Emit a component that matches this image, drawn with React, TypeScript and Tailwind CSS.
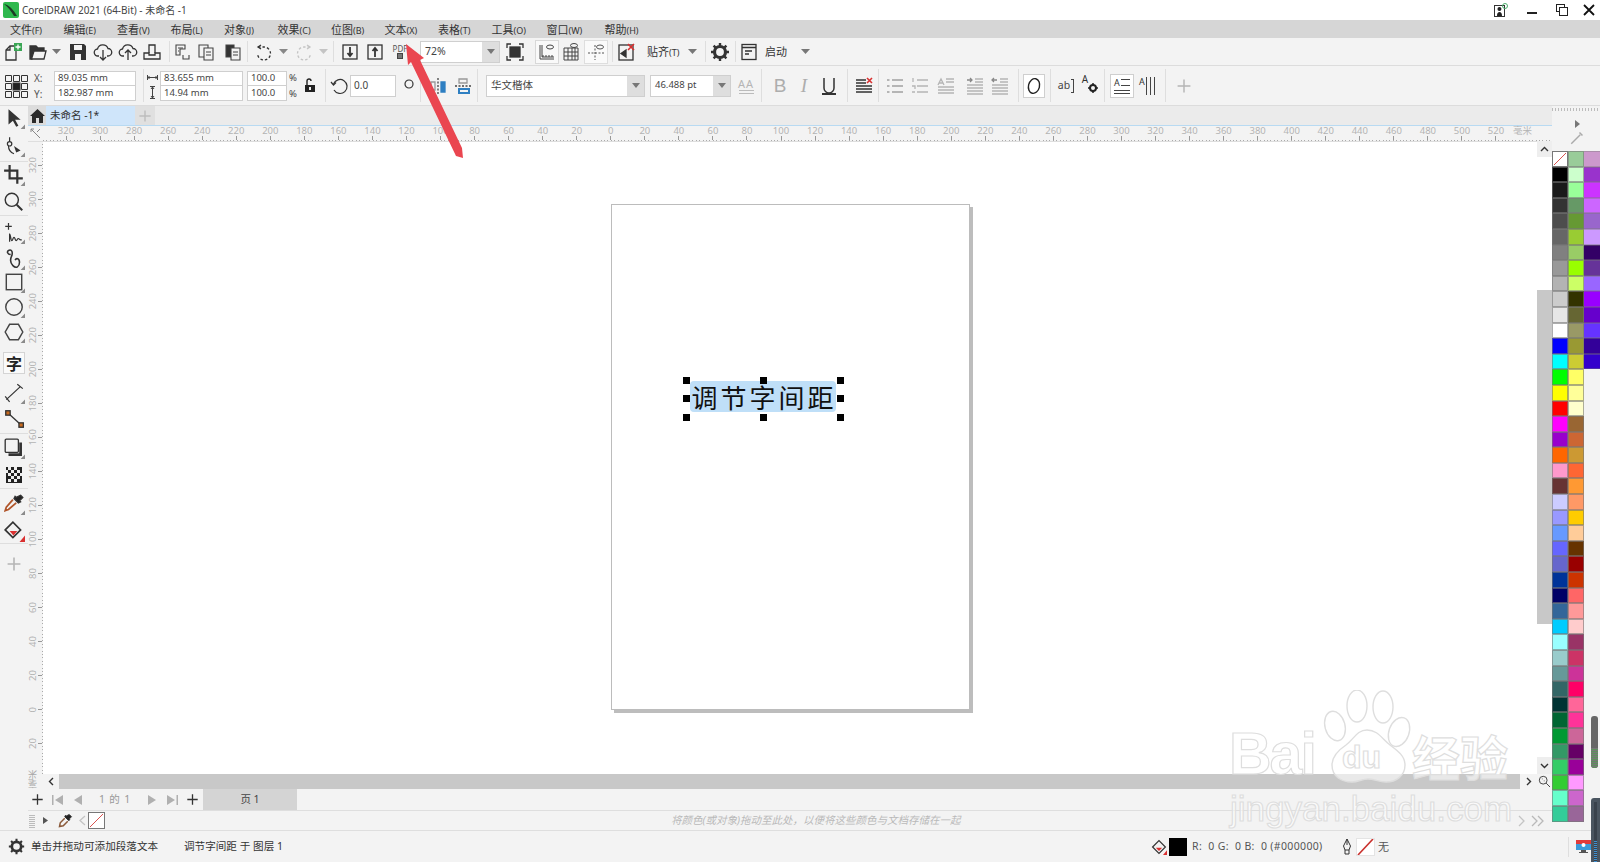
import type { ReactNode } from 'react'

const col1 = ['#000000', '#1a1a1a', '#333333', '#4d4d4d', '#666666', '#808080', '#999999', '#b3b3b3', '#cccccc', '#e6e6e6', '#ffffff', '#0000ff', '#00ffff', '#00ff00', '#ffff00', '#ff0000', '#ff00ff', '#9900cc', '#ff6600', '#ff99cc', '#663333', '#ccccff', '#9999ff', '#6699ff', '#6666ff', '#6666cc', '#003399', '#000066', '#336699', '#00ccff', '#99ffff', '#99cccc', '#669999', '#336666', '#003333', '#006633', '#009933', '#339966', '#33cc66', '#33cc33', '#66ffcc', '#33cc99']
const col2 = ['#99cc99', '#ccffcc', '#99ff99', '#669966', '#669933', '#99cc33', '#99cc66', '#99ff00', '#ccff66', '#333300', '#666633', '#999966', '#999933', '#cccc33', '#ffff66', '#ffff99', '#ffffcc', '#996633', '#cc6633', '#cc9933', '#ff6633', '#ff9933', '#ff9966', '#ffcc00', '#ffcc99', '#663300', '#990000', '#cc3300', '#ff6666', '#ff9999', '#ffcccc', '#993366', '#cc3366', '#cc3399', '#ff0066', '#ff6699', '#ff3399', '#cc6699', '#660066', '#990099', '#ff99ff', '#cc66cc', '#996699']
const col3 = ['#cc99cc', '#9933cc', '#cc33ff', '#cc66ff', '#9966cc', '#cc99ff', '#330066', '#663399', '#9966ff', '#9900ff', '#6600cc', '#6633ff', '#330099', '#3300cc']

const menus = ['文件|(F)', '编辑|(E)', '查看|(V)', '布局|(L)', '对象|(J)', '效果|(C)', '位图|(B)', '文本|(X)', '表格|(T)']
const hLabels = [320, 300, 280, 260, 240, 220, 200, 180, 160, 140, 120, 100, 80, 60, 40, 20, 0, 20, 40, 60, 80, 100, 120, 140, 160, 180, 200, 220, 240, 260, 280, 300, 320, 340, 360, 380, 400, 420, 440, 460, 480, 500, 520]
const vLabels = [320, 300, 280, 260, 240, 220, 200, 180, 160, 140, 120, 100, 80, 60, 40, 20, 0, 20]

function Ico({ s = 20, w = 1.3, c = '#333', children }: { s?: number; w?: number; c?: string; children: ReactNode }) {
  return (
    <svg width={s} height={s} viewBox="0 0 20 20" fill="none" stroke={c} strokeWidth={w} className="shrink-0">
      {children}
    </svg>
  )
}

const Corner = () => <path d="M20 20h-4l4-4z" fill="#8a8a8a" stroke="none" />

function Sep({ className = '' }: { className?: string }) {
  return <div className={`w-px self-stretch my-[3px] bg-[#dedede] shrink-0 ${className}`} />
}

function Slot({ className = '', children }: { className?: string; children: ReactNode }) {
  return <div className={`w-[24px] shrink-0 flex items-center justify-center ${className}`}>{children}</div>
}

function Drop({ className = '', c = '#777' }: { className?: string; c?: string }) {
  return (
    <div className={`w-[12px] shrink-0 flex items-center justify-center ${className}`}>
      <svg width="9" height="6" viewBox="0 0 9 6"><path d="M0 0h9L4.500 5z" fill={c} /></svg>
    </div>
  )
}

function Field({ className = '', children }: { className?: string; children: ReactNode }) {
  return <div className={`h-[15px] bg-white border border-[#cfcfcf] pl-[3px] flex items-center text-[9.5px] text-[#444] leading-none ${className}`}>{children}</div>
}

function Combo({ className = '', text, size = 'text-[10.5px]' }: { className?: string; text: string; size?: string }) {
  return (
    <div className={`h-[22px] shrink-0 flex bg-white border border-[#cfcfcf] ${className}`}>
      <span className={`flex-1 pl-[4px] flex items-center text-[#444] truncate ${size}`}>{text}</span>
      <span className="w-[17px] bg-[#dedede] flex items-center justify-center">
        <svg width="8" height="5" viewBox="0 0 8 5"><path d="M0 0h8L4 5z" fill="#777" /></svg>
      </span>
    </div>
  )
}

function Menu({ label, className = 'w-[53.5px]' }: { label: string; className?: string }) {
  const [a, b] = label.split('|')
  return (
    <div className={`shrink-0 text-[#333] text-[11px] leading-none whitespace-nowrap ${className}`}>
      {a}<span className="text-[9px]">{b}</span>
    </div>
  )
}

function Tool({ className, children }: { className: string; children: ReactNode }) {
  return <div className={`w-full flex items-center justify-center shrink-0 ${className}`}>{children}</div>
}

function Watermark() {
  return (
    <div className="absolute left-[1225px] top-[690px] w-[295px] h-[145px] pointer-events-none text-white/60 [font-family:'Liberation_Sans','Noto_Sans_CJK_SC',sans-serif] [-webkit-text-stroke:1.2px_#dedede]">
      <svg width="295" height="115" viewBox="1225 690 295 115" className="absolute left-0 top-0" fill="rgba(255,255,255,0.6)" stroke="#dedede" strokeWidth="1.4">
        <ellipse cx="1357" cy="706" rx="10" ry="16" />
        <ellipse cx="1383" cy="707" rx="10" ry="16" />
        <ellipse cx="1335" cy="726" rx="10" ry="15" transform="rotate(-15 1335 726)" />
        <ellipse cx="1399" cy="732" rx="10" ry="15" transform="rotate(20 1399 732)" />
        <path d="M1367 730c-10 0-13 9-21 15-9 6-14 12-14 20 0 12 10 17 20 17 6 0 10-3 16-3 6 0 11 3 18 3 10 0 19-6 19-17 0-9-7-14-15-20-8-6-12-15-23-15z" />
      </svg>
      <div className="absolute left-[4px] top-[35px] text-[59px] font-bold leading-none tracking-[-2px]">Bai</div>
      <div className="absolute left-[117px] top-[51px] text-[32px] font-bold leading-none">du</div>
      <div className="absolute left-[187px] top-[41px] text-[48px] font-bold leading-none whitespace-nowrap [font-family:'Noto_Sans_CJK_SC',sans-serif]">经验</div>
      <div className="absolute left-[5px] top-[101px] text-[35px] leading-none whitespace-nowrap">jingyan.baidu.com</div>
    </div>
  )
}

export default function App() {
  return (
    <div className="relative w-[1600px] h-[862px] overflow-hidden flex flex-col bg-[#f3f3f3] text-[#333] [font-family:'Noto_Sans','Noto_Sans_CJK_SC',sans-serif]">
      {/* title bar */}
      <div className="h-[20px] bg-white flex items-center shrink-0">
        <svg width="16" height="16" viewBox="0 0 16 16" className="ml-[3px] shrink-0">
          <rect width="16" height="16" rx="2" fill="#2fb84e" />
          <path d="M1 2c5 1 9 5 13 12l-3 0C8 9 5 5 1 2z" fill="#1c3b26" />
        </svg>
        <span className="ml-[3px] text-[10px] text-[#444] whitespace-nowrap">CorelDRAW 2021 (64-Bit) - 未命名 -1</span>
        <div className="ml-auto flex items-center">
          <svg width="14" height="14" viewBox="0 0 14 14" fill="none" className="shrink-0">
            <rect x="0.500" y="2.500" width="10" height="11" stroke="#333" />
            <path d="M3 13c0-3 1-4 2.500-4S8 10 8 13zM5.500 4a2 2 0 1 1-.1 4 2 2 0 0 1 .1-4z" fill="#222" />
            <circle cx="11" cy="3" r="2.500" stroke="#4caf6c" />
          </svg>
          <div className="ml-[19px] w-[10px] h-[2px] bg-[#222] mt-[5px]" />
          <svg width="12" height="12" viewBox="0 0 12 12" fill="none" stroke="#222" className="ml-[19px] shrink-0">
            <rect x="0.500" y="0.500" width="8" height="7" />
            <rect x="3.500" y="3.500" width="8" height="8" fill="#fff" />
          </svg>
          <svg width="12" height="12" viewBox="0 0 12 12" stroke="#111" strokeWidth="1.800" className="ml-[15px] mr-[5px] shrink-0"><path d="M1 1l10 10M11 1L1 11" /></svg>
        </div>
      </div>

      {/* menu bar */}
      <div className="h-[18px] bg-[#d6d6d6] flex items-center pl-[10px] shrink-0">
        {menus.map((m) => <Menu key={m} label={m} />)}
        <Menu label="工具|(O)" className="w-[55px]" />
        <Menu label="窗口|(W)" className="w-[58px]" />
        <Menu label="帮助|(H)" className="w-[50px]" />
      </div>

      {/* standard toolbar */}
      <div className="h-[28px] flex items-center shrink-0 border-b border-[#dcdcdc]">
        <Slot className="ml-[1px]">
          <Ico><path d="M3 18V8l4-4h6v14z" /><path d="M3 8h4V4" /><rect x="11" y="1" width="8" height="8" fill="#3aa655" stroke="none" /><path d="M15 2.500v5M12.500 5h5" stroke="#fff" /></Ico>
        </Slot>
        <Slot className="ml-[1px]">
          <Ico><path d="M2 4h6l2 2h6v3H6l-2 8H2z" fill="#333" /><path d="M6 9h12l-2 8H3.500z" fill="#f3f3f3" /></Ico>
        </Slot>
        <Drop />
        <Slot className="ml-[4px]">
          <Ico w={0}><path d="M2 2h14l2 2v14H2z" fill="#333" /><rect x="6" y="3" width="8" height="5" fill="#f3f3f3" /><rect x="7" y="12" width="6" height="6" fill="#f3f3f3" /></Ico>
        </Slot>
        <Slot className="ml-[1px]">
          <Ico><path d="M6 14H5a3.500 3.500 0 0 1-.5-7A5.500 5.500 0 0 1 15 6.500 3.700 3.700 0 0 1 15 14h-1" /><path d="M10 8v10M7 15l3 3 3-3" /></Ico>
        </Slot>
        <Slot className="ml-[1px]">
          <Ico><path d="M6 14H5a3.500 3.500 0 0 1-.5-7A5.500 5.500 0 0 1 15 6.500 3.700 3.700 0 0 1 15 14h-1" /><path d="M10 18V8M7 11l3-3 3 3" /></Ico>
        </Slot>
        <Slot>
          <Ico><path d="M7 11V3h6v8" /><path d="M2 11h5v2h6v-2h5v6H2z" /></Ico>
        </Slot>
        <Sep className="ml-[5px]" />
        <Slot>
          <Ico c="#444" w={1.1}><path d="M4 3h9v4h-5v6H4z" /><path d="M6 6h5M6 9h1" /><path d="M11 13v4h6v-4" /></Ico>
        </Slot>
        <Slot>
          <Ico c="#444" w={1.1}><path d="M3 3h9v12H3z" /><path d="M8 6h9v12H8z" fill="#f3f3f3" /><path d="M10 10h5M10 13h5" /></Ico>
        </Slot>
        <Slot className="ml-[3px]">
          <Ico c="#444" w={1.1}><path d="M3 3h8v12H3z" fill="#333" /><path d="M8 6h9v12H8z" fill="#f3f3f3" /><path d="M10 10h5M10 13h5" /></Ico>
        </Slot>
        <Sep className="ml-[2px]" />
        <Slot className="ml-[4px]">
          <Ico><path d="M7 3l-3 2 3 2" /><path d="M4 5h6a6.500 6.500 0 1 1-6.500 7" strokeDasharray="2.500 2" /></Ico>
        </Slot>
        <Drop className="ml-[1px]" c="#888" />
        <Slot className="ml-[3px]">
          <Ico c="#c4c4c4"><path d="M13 3l3 2-3 2" /><path d="M16 5h-6a6.500 6.500 0 1 0 6.500 7" strokeDasharray="2.500 2" /></Ico>
        </Slot>
        <Drop className="ml-[1px]" c="#c4c4c4" />
        <Sep className="ml-[4px]" />
        <Slot className="ml-[4px]">
          <Ico><rect x="3" y="3" width="14" height="14" /><path d="M10 5v9M7.500 11l2.500 3 2.500-3" strokeWidth="1.800" /></Ico>
        </Slot>
        <Slot className="ml-[1px]">
          <Ico><rect x="3" y="3" width="14" height="14" /><path d="M10 15V6M7.500 9L10 6l2.500 3" strokeWidth="1.800" /></Ico>
        </Slot>
        <Slot className="ml-[1px]">
          <div className="flex flex-col items-center leading-none text-[#555]">
            <span className="text-[8px] leading-[8px]">PDF</span>
            <span className="w-[6px] h-[6px] border border-[#444] bg-[#777]" />
          </div>
        </Slot>
        <Combo className="ml-[8px] w-[80px]" text="72%" />
        <Slot className="ml-[3px]">
          <Ico><path d="M2 6V2h4M14 2h4v4M18 14v4h-4M6 18H2v-4" /><rect x="5" y="5" width="10" height="10" fill="#333" /></Ico>
        </Slot>
        <Slot className="ml-[8px] h-[24px] bg-[#f9f9f9] border border-[#d8d8d8]">
          <Ico c="#444" w={1}><path d="M3 3v14h14" /><path d="M5 3v12h12M6 13v2M9 13v2M12 13v2M15 13v2" /><ellipse cx="13" cy="5" rx="3.500" ry="2" /></Ico>
        </Slot>
        <Slot>
          <Ico c="#444" w={1}><path d="M3 6h14v12H3zM3 10h14M3 14h14M7 6v12M11 6v12M14 6v12" /><ellipse cx="13" cy="3.500" rx="3.500" ry="2" /></Ico>
        </Slot>
        <Slot className="ml-[1px] h-[24px] bg-[#fafafa] border border-[#dedede]">
          <Ico c="#555" w={1}><path d="M9 3v15M2 11h16" strokeDasharray="2 1.500" /><ellipse cx="14" cy="5" rx="3.500" ry="2" /></Ico>
        </Slot>
        <Sep className="ml-[4px]" />
        <Slot className="ml-[2px]">
          <Ico><rect x="2" y="3" width="14" height="15" /><path d="M9 8l-5 3.500L9 15z" fill="#333" /><path d="M11 2l6 6M17 2l-6 6" stroke="#d93030" strokeWidth="1.600" /></Ico>
        </Slot>
        <span className="ml-[8px] w-[33px] shrink-0 text-[11px] leading-none whitespace-nowrap">贴齐<span className="text-[9px]">(T)</span></span>
        <Drop className="ml-[6px]" />
        <Sep className="ml-[7px]" />
        <Slot className="ml-[2px]">
          <Ico w={3.200}><circle cx="10" cy="10" r="5.500" /><path d="M10 1v3M10 16v3M1 10h3M16 10h3M3.600 3.600l2 2M14.400 14.400l2 2M16.400 3.600l-2 2M5.600 14.400l-2 2" strokeWidth="2.400" /></Ico>
        </Slot>
        <Sep className="ml-[3px]" />
        <Slot className="ml-[1px]">
          <Ico><rect x="3" y="2.500" width="14" height="15" /><path d="M3 5.500h14M6 9h7M6 12h4" /></Ico>
        </Slot>
        <span className="ml-[4px] w-[22px] shrink-0 text-[11px] leading-none whitespace-nowrap">启动</span>
        <Drop className="ml-[12px]" />
      </div>

      {/* property bar */}
      <div className="h-[40px] flex items-center shrink-0 border-b border-[#dcdcdc]">
        <Slot className="ml-[4px]">
          <svg width="24" height="24" viewBox="0 0 24 24" fill="none" stroke="#333" className="shrink-0">
            <path d="M1.500 1.500h6v6h-6zM9.500 1.500h6v6h-6zM17.500 1.500h6v6h-6zM1.500 9.500h6v6h-6zM17.500 9.500h6v6h-6zM1.500 17.500h6v6h-6zM9.500 17.500h6v6h-6zM17.500 17.500h6v6h-6z" />
            <rect x="9" y="9" width="7" height="7" fill="#222" />
          </svg>
        </Slot>
        <div className="ml-[6px] w-[20px] shrink-0 flex flex-col gap-[1px] text-[10px] text-[#555] leading-none">
          <span className="h-[15px] flex items-center">X:</span>
          <span className="h-[15px] flex items-center">Y:</span>
        </div>
        <div className="w-[82px] shrink-0 flex flex-col">
          <Field>89.035 mm</Field>
          <Field className="-mt-px h-[16px]">182.987 mm</Field>
        </div>
        <Sep className="ml-[7px]" />
        <div className="ml-[2px] w-[12px] shrink-0 flex flex-col items-center gap-[3px]">
          <svg width="11" height="11" viewBox="0 0 11 11" stroke="#444"><path d="M0.500 3v5M10.500 3v5M1 5.500h9M2.500 4l-1.500 1.500L2.500 7M8.500 4L10 5.500 8.500 7" fill="none" /></svg>
          <svg width="11" height="13" viewBox="0 0 11 13" stroke="#444"><path d="M3 .5h5M3 12.500h5M5.500 1v11M4 3l1.500-2L7 3M4 10l1.500 2L7 10" fill="none" /></svg>
        </div>
        <div className="ml-[2px] w-[83px] shrink-0 flex flex-col">
          <Field>83.655 mm</Field>
          <Field className="-mt-px h-[16px]">14.94 mm</Field>
        </div>
        <div className="ml-[4px] w-[40px] shrink-0 flex flex-col">
          <Field>100.0</Field>
          <Field className="-mt-px h-[16px]">100.0</Field>
        </div>
        <div className="ml-[2px] w-[8px] shrink-0 flex flex-col gap-[1px] text-[9.5px] text-[#444] leading-none">
          <span className="h-[15px] flex items-center">%</span>
          <span className="h-[15px] flex items-center">%</span>
        </div>
        <Slot className="ml-[1px]">
          <svg width="12" height="15" viewBox="0 0 12 15" fill="none" className="shrink-0"><path d="M3 7V3a2 2 0 0 1 4 0" stroke="#222" strokeWidth="1.400" /><rect x="1" y="7" width="10" height="7" fill="#222" /><rect x="5" y="9" width="2" height="3" fill="#eee" /></svg>
        </Slot>
        <Sep className="ml-[3px]" />
        <div className="ml-[4px] w-[20px] shrink-0 flex justify-center">
          <Ico w={1.200}><path d="M3.500 8a7 7 0 1 1 .5 6" /><path d="M1 6l2.500 3L6 6.500" /></Ico>
        </div>
        <div className="w-[46px] h-[22px] shrink-0 bg-white border border-[#cfcfcf] pl-[3px] flex items-center text-[10px] text-[#444]">0.0</div>
        <div className="ml-[3px] w-[20px] shrink-0 flex justify-center pb-[4px]">
          <svg width="10" height="10" viewBox="0 0 10 10" fill="none" stroke="#333" strokeWidth="1.200"><circle cx="5" cy="5" r="4" /></svg>
        </div>
        <Sep className="ml-[1px]" />
        <Slot className="ml-[5px]">
          <Ico c="#777" w={1.300}><path d="M10 2v16" strokeDasharray="2 1.500" stroke="#444" /><path d="M3 6h4v8H3z" stroke="#999" /><path d="M13 6h4v10h-4z" fill="#2e7fc2" stroke="#2e7fc2" /></Ico>
        </Slot>
        <Slot className="ml-[1px]">
          <Ico w={1.300}><path d="M2 10h16" strokeDasharray="2 1.500" stroke="#444" /><path d="M6 3h8v4H6z" stroke="#999" /><path d="M6 13h10v4H6z" fill="none" stroke="#2e7fc2" strokeWidth="2" /></Ico>
        </Slot>
        <Sep className="ml-[2px]" />
        <Combo className="ml-[8px] w-[159px]" text="华文楷体" />
        <Combo className="ml-[5px] w-[81px]" text="46.488 pt" size="text-[9.5px]" />
        <Slot className="ml-[3px]">
          <div className="flex flex-col items-center leading-none text-[#b5b5b5]">
            <span className="text-[11px] leading-[12px] tracking-[1px]">AA</span>
            <span className="w-[15px] h-[4px] border-y border-[#bbb]" />
          </div>
        </Slot>
        <Sep className="ml-[3px]" />
        <Slot className="ml-[6px] text-[19px] leading-none text-[#adadad] [font-family:'Liberation_Sans',sans-serif]">B</Slot>
        <Slot className="text-[19px] leading-none text-[#adadad] italic [font-family:'Liberation_Serif',serif]">I</Slot>
        <Slot className="ml-[1px]">
          <Ico w={1.500}><path d="M5 2v10a5 5 0 0 0 10 0V2" /><path d="M3 18h14" strokeWidth="2" /></Ico>
        </Slot>
        <Sep className="ml-[6px]" />
        <Slot className="ml-[4px]">
          <Ico w={1.600}><path d="M2 4h10M2 7h10M2 10h16M2 13h16M2 16h16" /><path d="M13 2l5 5M18 2l-5 5" stroke="#d93030" /></Ico>
        </Slot>
        <Sep className="ml-[2px]" />
        <Slot className="ml-[4px]">
          <Ico c="#b5b5b5"><path d="M7 4h11M7 10h11M7 16h11M2 4h2.500M2 10h2.500M2 16h2.500" strokeWidth="2" /></Ico>
        </Slot>
        <Slot className="ml-[1px]">
          <Ico c="#b5b5b5"><path d="M7 4h11M7 10h11M7 16h11M3 2v4M2 10h3v3M2 16h3" /></Ico>
        </Slot>
        <Slot className="ml-[2px]">
          <Ico c="#b5b5b5"><path d="M2 9l3-6 3 6M3 7h4M10 3h8M10 6h8M2 11h16M2 14h16M2 17h16" /></Ico>
        </Slot>
        <Slot className="ml-[5px]">
          <Ico c="#b5b5b5"><path d="M10 3h8M10 6h8M2 9h16M2 12h16M2 15h16M2 18h16" /><path d="M2 4h5M5 2l2 2-2 2" stroke="#888" /></Ico>
        </Slot>
        <Slot className="ml-[1px]">
          <Ico c="#b5b5b5"><path d="M10 3h8M10 6h8M2 9h16M2 12h16M2 15h16M2 18h16" /><path d="M7 4H2M4 2L2 4l2 2" stroke="#888" /></Ico>
        </Slot>
        <Sep className="ml-[6px]" />
        <div className="ml-[4px] w-[22px] h-[24px] shrink-0 bg-white border border-[#cfcfcf] flex items-center justify-center">
          <svg width="16" height="18" viewBox="0 0 16 18" fill="none" stroke="#222" strokeWidth="1.400"><ellipse cx="8" cy="9" rx="5.500" ry="7.500" transform="rotate(14 8 9)" /></svg>
        </div>
        <Sep className="ml-[5px]" />
        <Slot className="ml-[3px]">
          <div className="flex items-center text-[10.5px] text-[#444] leading-none">ab<span className="ml-[1px] w-[3px] h-[14px] border-y border-r border-[#444]" /></div>
        </Slot>
        <Slot>
          <div className="flex text-[#333] leading-none">
            <span className="text-[10px] -mt-[4px]">A</span>
            <svg width="10" height="10" viewBox="0 0 10 10" fill="none" stroke="#222" strokeWidth="2" className="mt-[5px]"><circle cx="5" cy="5" r="3" /><path d="M5 0v2M5 8v2M0 5h2M8 5h2" strokeWidth="1.500" /></svg>
          </div>
        </Slot>
        <Sep className="ml-[2px]" />
        <Slot className="ml-[5px] h-[24px] bg-white border border-[#cfcfcf]">
          <div className="flex flex-col items-stretch w-[16px] text-[#333]">
            <div className="flex items-center leading-none">
              <span className="text-[9px] leading-[10px]">A</span>
              <span className="ml-[1px] flex-1 h-[7px] border-y border-[#444]" />
            </div>
            <span className="mt-[2px] h-[1px] bg-[#444]" />
            <span className="mt-[2px] h-[1px] bg-[#444]" />
          </div>
        </Slot>
        <Slot className="ml-[1px]">
          <div className="flex items-end text-[#333] leading-none">
            <span className="text-[9px] self-start">A</span>
            <span className="ml-[1px] w-[1px] h-[18px] bg-[#444]" />
            <span className="ml-[3px] w-[1px] h-[18px] bg-[#444]" />
            <span className="ml-[3px] w-[1px] h-[18px] bg-[#444]" />
          </div>
        </Slot>
        <Sep className="ml-[6px]" />
        <Slot className="ml-[6px]">
          <Ico c="#b5b5b5" w={1.800} s={16}><path d="M10 2v16M2 10h16" /></Ico>
        </Slot>
      </div>

      {/* main area */}
      <div className="flex-1 min-h-0 flex">
        {/* toolbox */}
        <div className="w-[28px] shrink-0 flex flex-col">
          <Tool className="h-[24px]"><Ico w={0} s={22}><path d="M5 2v14l4-3.500 3 5.500 2-1-3-5.500h5z" fill="#333" /><Corner /></Ico></Tool>
          <Tool className="h-[32px] border-b border-[#dedede]"><Ico s={22} w={1.100}><path d="M6 2v4M4 8a2 2 0 1 0 4 0 2 2 0 0 0-4 0zM5 10c0 4 2 6 5 7" /><path d="M10 10l6 4-4 2z" fill="#333" stroke="none" /><Corner /></Ico></Tool>
          <Tool className="h-[26px]"><Ico s={22} w={2}><path d="M6 1v12h12M1 6h12v12" /><Corner /></Ico></Tool>
          <Tool className="h-[28px] border-b border-[#dedede]"><Ico s={22} w={1.300}><circle cx="8" cy="8" r="6" /><path d="M12.500 12.500l5 5" strokeWidth="1.800" /></Ico></Tool>
          <Tool className="h-[34px]"><Ico s={22} w={1.100}><path d="M5 1v6M2 4h6M6 18v-7c1 0 1 6 2 6s1-3 2-3 1 3 2 3 1-2 2-2 1 2 3 1" /><Corner /></Ico></Tool>
          <Tool className="h-[18px]"><Ico s={22} w={1.400}><path d="M7 6C4 6 3 3 5.500 2S9 4 8 7c-1 2-2 6 1 9s6 1 6-3-3-4-4-2" /><Corner /></Ico></Tool>
          <Tool className="h-[27px]"><Ico s={22} w={1.300} c="#444"><rect x="3" y="3" width="14" height="14" /><Corner /></Ico></Tool>
          <Tool className="h-[24px]"><Ico s={22} w={1.300} c="#444"><circle cx="10" cy="10" r="7.500" /><Corner /></Ico></Tool>
          <Tool className="h-[26px]"><Ico s={22} w={1.300} c="#444"><path d="M6 3h8l4 7-4 7H6l-4-7z" /><Corner /></Ico></Tool>
          <Tool className="h-[36px]">
            <div className="w-[22px] h-[22px] bg-[#fafafa] border border-[#d4d4d4] flex items-center justify-center text-[16px] font-bold leading-none text-[#222] [font-family:'Noto_Sans_CJK_SC',sans-serif]">字</div>
          </Tool>
          <Tool className="h-[23px]"><Ico s={22} w={1.100}><path d="M3 16L16 4M2 13l4 5M13 2l5 4" /><Corner /></Ico></Tool>
          <Tool className="h-[30px] border-b border-[#dedede]"><Ico s={22} w={1.200}><path d="M5 5l11 10" /><rect x="2.500" y="2.500" width="4" height="4" fill="#c86a1e" stroke="#333" /><rect x="14.500" y="13.500" width="4" height="4" fill="#c86a1e" stroke="#333" /></Ico></Tool>
          <Tool className="h-[28px]"><Ico s={22} w={1.200}><rect x="2" y="2" width="12" height="12" rx="1" /><path d="M16 5v11H5" strokeWidth="2.500" /><Corner /></Ico></Tool>
          <Tool className="h-[27px] border-b border-[#dedede]">
            <svg width="16" height="16" viewBox="0 0 16 16" className="shrink-0">
              <rect width="16" height="16" fill="#222" />
              <path d="M2 0h3v3H2zM8 0h3v3H8zM0 3h2v3H0zM5 3h3v3H5zM11 3h3v3h-3zM2 6h3v3H2zM8 6h3v3H8zM14 6h2v3h-2zM5 9h3v3H5zM11 9h3v3h-3zM2 12h3v3H2zM8 12h3v3H8z" fill="#eee" />
            </svg>
          </Tool>
          <Tool className="h-[30px]"><Ico s={22} w={1.200}><path d="M16 2l2 2-3 3 1 1-2 1-4-4 1-2 1 1z" fill="#222" /><path d="M9 6l-6 7-1 3 3-1 7-6" stroke="#b0552a" strokeWidth="1.600" /><Corner /></Ico></Tool>
          <Tool className="h-[25px] border-b border-[#dedede]"><Ico s={22} w={1.500}><path d="M2 9l7-7 7 7-7 7z" /><path d="M6 10h7l-3.500 4z" fill="#d93030" stroke="none" /><path d="M20 14v6h-5z" fill="#d93030" stroke="none" /></Ico></Tool>
          <Tool className="h-[40px]"><Ico c="#b5b5b5" w={2} s={16}><path d="M10 2v16M2 10h16" /></Ico></Tool>
        </div>

        {/* centre column */}
        <div className="w-[1524px] shrink-0 flex flex-col">
          {/* tabs */}
          <div className="h-[19px] bg-[#ebebeb] flex shrink-0">
            <div className="w-[18px] bg-[#dcdcdc] flex items-center justify-center">
              <svg width="15" height="14" viewBox="0 0 15 14"><path d="M7.500 0L15 7h-2v7H9V9H6v5H2V7H0z" fill="#2a2a2a" /></svg>
            </div>
            <div className="w-[89px] bg-[#cfe5fa] pl-[4px] flex items-center text-[10.5px] text-[#333] whitespace-nowrap">未命名 -1*</div>
            <div className="w-[20px] bg-[#e0e0e0] flex items-center justify-center">
              <Ico c="#bdbdbd" w={2} s={14}><path d="M10 2v16M2 10h16" /></Ico>
            </div>
          </div>
          {/* horizontal ruler */}
          <div className="h-[16px] shrink-0 flex border-t border-[#b8daf2] bg-[#f3f3f3]">
            <div className="w-[15px] shrink-0 flex items-center justify-center">
              <svg width="11" height="11" viewBox="0 0 11 11" stroke="#888" fill="none"><path d="M1 1l9 9M1 1h3M1 1v3M10 1L7 4" /></svg>
            </div>
            <div className="flex-1 min-w-0 flex flex-col">
              <div className="flex pl-[6px] h-[10px]">
                {hLabels.map((l, i) => (
                  <div key={i} className="w-[34.050px] shrink-0 text-center text-[9.5px] leading-[10px] text-[#b4b4b4]">{l}</div>
                ))}
                <div className="w-[20px] shrink-0 text-[9.5px] leading-[10px] text-[#b4b4b4] whitespace-nowrap">毫米</div>
              </div>
              <div className="flex pl-[6px] h-[4px]">
                {hLabels.map((l, i) => (
                  <div key={i} className="w-[34.050px] shrink-0 flex justify-center"><span className="w-px h-[4px] bg-[#999]" /></div>
                ))}
              </div>
              <div className="h-px bg-[repeating-linear-gradient(90deg,#aaa_0,#aaa_1px,transparent_1px,transparent_3.400px)]" />
            </div>
          </div>

          {/* canvas row */}
          <div className="h-[633px] shrink-0 flex">
            <div className="w-[15px] shrink-0 flex border-t border-[#dedede]">
              <div className="w-[14px] shrink-0 flex flex-col pt-[6px]">
                {vLabels.map((l, i) => (
                  <div key={i} className="h-[34.050px] shrink-0 flex items-center">
                    <span className="w-[10px] text-[9.5px] leading-[10px] text-[#b4b4b4] [writing-mode:vertical-rl] rotate-180 text-center">{l}</span>
                    <span className="w-[4px] h-px bg-[#999]" />
                  </div>
                ))}
              </div>
              <div className="w-px bg-[repeating-linear-gradient(0deg,#aaa_0,#aaa_1px,transparent_1px,transparent_3.400px)]" />
            </div>
            <div className="w-[1494px] shrink-0 bg-white pl-[568px] pt-[62px] border-t border-[#dedede]">
              <div className="relative w-[359px] h-[506px] bg-white border border-[#bcbcbc] shadow-[3px_3px_0_#bdbdbd] pl-[78px] pt-[176px]">
                <div className="w-[146px] h-[31px] rounded-[4px] bg-[#bfdff8] flex items-center justify-center pl-[2px] text-[26px] leading-none tracking-[3px] text-[#111] whitespace-nowrap [font-family:'Noto_Sans_CJK_SC',sans-serif]">
                  调节字间距
                </div>
                <span className="absolute left-[71px] top-[172px] w-[7px] h-[7px] bg-black" />
                <span className="absolute left-[148px] top-[172px] w-[7px] h-[7px] bg-black" />
                <span className="absolute left-[225px] top-[172px] w-[7px] h-[7px] bg-black" />
                <span className="absolute left-[71px] top-[190px] w-[7px] h-[7px] bg-black" />
                <span className="absolute left-[225px] top-[190px] w-[7px] h-[7px] bg-black" />
                <span className="absolute left-[71px] top-[209px] w-[7px] h-[7px] bg-black" />
                <span className="absolute left-[148px] top-[209px] w-[7px] h-[7px] bg-black" />
                <span className="absolute left-[225px] top-[209px] w-[7px] h-[7px] bg-black" />
              </div>
            </div>
            <div className="w-[15px] shrink-0 flex flex-col bg-white">
              <div className="h-[16px] bg-[#eeeeee] flex items-center justify-center">
                <svg width="9" height="6" viewBox="0 0 9 6" fill="none" stroke="#333" strokeWidth="1.400"><path d="M1 5l3.500-3.500L8 5" /></svg>
              </div>
              <div className="h-[133px]" />
              <div className="h-[334px] bg-[#c8c8c8]" />
              <div className="flex-1" />
              <div className="h-[17px] bg-[#eeeeee] flex items-center justify-center">
                <svg width="9" height="6" viewBox="0 0 9 6" fill="none" stroke="#333" strokeWidth="1.400"><path d="M1 1l3.500 3.500L8 1" /></svg>
              </div>
            </div>
          </div>

          {/* horizontal scrollbar */}
          <div className="h-[15px] shrink-0 flex">
            <div className="w-[15px] shrink-0 text-[9px] leading-[9px] text-[#aaaaaa] [writing-mode:vertical-rl] rotate-180 -mt-[5px] h-[20px] text-center">毫米</div>
            <div className="w-[16px] shrink-0 flex items-center justify-center">
              <svg width="6" height="9" viewBox="0 0 6 9" fill="none" stroke="#333" strokeWidth="1.400"><path d="M5 1L1.500 4.500 5 8" /></svg>
            </div>
            <div className="w-[1461px] shrink-0 bg-[#c8c8c8]" />
            <div className="w-[17px] shrink-0 flex items-center justify-center">
              <svg width="6" height="9" viewBox="0 0 6 9" fill="none" stroke="#333" strokeWidth="1.400"><path d="M1 1l3.500 3.500L1 8" /></svg>
            </div>
            <div className="w-[15px] shrink-0 flex items-center justify-center">
              <Ico s={13} w={1.500} c="#444"><circle cx="8" cy="8" r="6" /><path d="M12.500 12.500l6 6" /><path d="M6 6h1M9 9h1" /></Ico>
            </div>
          </div>

          {/* page navigator */}
          <div className="h-[22px] shrink-0 flex items-center border-b border-[#dedede]">
            <div className="ml-[2px] w-[14px] flex justify-center"><Ico s={13} w={2} c="#333"><path d="M10 2v16M2 10h16" /></Ico></div>
            <svg width="11" height="10" viewBox="0 0 11 10" className="ml-[8px]" fill="#b0b0b0"><path d="M0 0h1.500v10H0zM11 0v10L3 5z" /></svg>
            <svg width="8" height="10" viewBox="0 0 8 10" className="ml-[11px]" fill="#b0b0b0"><path d="M8 0v10L0 5z" /></svg>
            <span className="ml-[17px] w-[36px] shrink-0 text-[10.5px] leading-none tracking-[0.8px] text-[#999] whitespace-nowrap">1 的 1</span>
            <svg width="8" height="10" viewBox="0 0 8 10" className="ml-[13px]" fill="#b0b0b0"><path d="M0 0v10l8-5z" /></svg>
            <svg width="11" height="10" viewBox="0 0 11 10" className="ml-[11px]" fill="#b0b0b0"><path d="M0 0v10l8-5zM9.500 0H11v10H9.500z" /></svg>
            <div className="ml-[7px] w-[14px] flex justify-center"><Ico s={13} w={2} c="#333"><path d="M10 2v16M2 10h16" /></Ico></div>
            <div className="ml-[4px] w-[94px] h-full bg-[#d4d4d4] flex items-center justify-center text-[10.5px] text-[#444]">页 1</div>
          </div>

          {/* document palette */}
          <div className="h-[19px] shrink-0 flex items-center">
            <div className="ml-[1px] w-[6px] h-[14px] bg-[repeating-linear-gradient(0deg,#bbb_0,#bbb_1px,transparent_1px,transparent_2px)]" />
            <svg width="5" height="7" viewBox="0 0 5 7" className="ml-[8px]" fill="#555"><path d="M0 0v7l5-3.500z" /></svg>
            <div className="ml-[9px] w-[16px] flex justify-center">
              <Ico s={15} w={1.300}><path d="M15 2l3 3-3 3 1 1-2 1-5-5 1-2 1 1z" fill="#222" /><path d="M9 7l-6 6-1 5 5-1 6-6" stroke="#8a5a3a" strokeWidth="2" /></Ico>
            </div>
            <svg width="7" height="11" viewBox="0 0 7 11" className="ml-[6px]" fill="none" stroke="#c4c4c4" strokeWidth="1.300"><path d="M6 1L1 5.500 6 10" /></svg>
            <div className="ml-[2px] w-[17px] h-[17px] bg-white border border-[#777] shrink-0 overflow-hidden">
              <svg width="15" height="15" viewBox="0 0 15 15"><path d="M1 14L14 1" stroke="#d9534f" /></svg>
            </div>
            <span className="ml-[566px] text-[10.500px] leading-none text-[#b9b9b9] italic whitespace-nowrap">将颜色(或对象)拖动至此处，以便将这些颜色与文档存储在一起</span>
            <svg width="8" height="12" viewBox="0 0 8 12" className="ml-[557px]" fill="none" stroke="#c4c4c4" strokeWidth="1.300"><path d="M1 1l5 5-5 5" /></svg>
            <div className="ml-[5px] flex">
              <svg width="14" height="12" viewBox="0 0 14 12" fill="none" stroke="#b9b9b9" strokeWidth="1.300"><path d="M1 1l5 5-5 5M7 1l5 5-5 5" /></svg>
            </div>
          </div>
        </div>

        {/* colour palette */}
        <div className="w-[48px] shrink-0 flex flex-col">
          <div className="h-[45px] shrink-0 flex flex-col items-center">
            <div className="mt-[2px] w-full h-[3px] bg-[repeating-linear-gradient(90deg,#bbb_0,#bbb_1px,transparent_1px,transparent_3px)]" />
            <svg width="5" height="8" viewBox="0 0 5 8" className="mt-[9px] ml-[2px]" fill="#777"><path d="M0 0v8l5-4z" /></svg>
            <div className="mt-[3px]"><Ico s={15} c="#aaa" w={2}><path d="M3 17L15 5" /><path d="M14 2l4 4" /></Ico></div>
          </div>
          <div className="flex">
            <div className="w-[16px] flex flex-col shrink-0">
              <div className="h-[15.600px] bg-white border border-[#777] overflow-hidden">
                <svg width="14" height="14" viewBox="0 0 14 14"><path d="M1 13L13 1" stroke="#d9534f" /></svg>
              </div>
              {col1.map((c, i) => <div key={i} className="h-[15.600px] border border-[#777]/60" style={{ backgroundColor: c }} />)}
            </div>
            <div className="w-[16px] flex flex-col shrink-0">
              {col2.map((c, i) => <div key={i} className="h-[15.600px] border border-[#777]/60" style={{ backgroundColor: c }} />)}
            </div>
            <div className="w-[16px] flex flex-col shrink-0">
              {col3.map((c, i) => <div key={i} className="h-[15.600px] border-y border-[#777]/40" style={{ backgroundColor: c }} />)}
            </div>
          </div>
        </div>
      </div>

      {/* status bar */}
      <div className="h-[32px] shrink-0 flex items-center border-t border-[#dedede] text-[10.600px] text-[#333] leading-none whitespace-nowrap">
        <div className="ml-[8px] w-[17px] flex justify-center">
          <Ico s={17} w={3.200}><circle cx="10" cy="10" r="5.500" /><path d="M10 1v3M10 16v3M1 10h3M16 10h3M3.600 3.600l2 2M14.400 14.400l2 2M16.400 3.600l-2 2M5.600 14.400l-2 2" strokeWidth="2.400" /></Ico>
        </div>
        <span className="ml-[6px] w-[127px] shrink-0">单击并拖动可添加段落文本</span>
        <span className="ml-[26px] w-[97px] shrink-0">调节字间距 于 图层 1</span>
        <div className="ml-[870px] w-[16px] flex justify-center">
          <Ico s={16} w={1.500}><path d="M2 10l8-8 8 8-8 8z" /><path d="M6 11h8l-4 4z" fill="#d93030" stroke="none" /><path d="M20 14v6h-5z" fill="#d93030" stroke="none" /></Ico>
        </div>
        <div className="ml-[2px] w-[18px] h-[18px] bg-black shrink-0" />
        <span className="ml-[5px] w-[128px] shrink-0 text-[10.500px] tracking-[0.35px] text-[#555]">R:&nbsp;&nbsp;0 G:&nbsp;&nbsp;0 B:&nbsp;&nbsp;0 (#000000)</span>
        <div className="ml-[20px] w-[14px] flex justify-center">
          <svg width="10" height="18" viewBox="0 0 10 18" fill="none" stroke="#333"><path d="M5 1L1.500 8 3 12h4l1.500-4zM5 1v6M3 12v4h4v-4" /></svg>
        </div>
        <div className="ml-[2px] w-[19px] h-[18px] bg-white border border-[#e4e4e4] shrink-0 overflow-hidden">
          <svg width="17" height="16" viewBox="0 0 17 16"><path d="M1 16L16 0" stroke="#c9302c" strokeWidth="1.600" /></svg>
        </div>
        <span className="ml-[3px] text-[11px] text-[#555]">无</span>
        <div className="ml-[179px] w-px h-[20px] bg-[#dedede]" />
        <svg width="15" height="14" viewBox="0 0 15 14" className="ml-[7px] shrink-0">
          <rect width="15" height="10" fill="#3a9ad9" />
          <rect width="15" height="4" fill="#e03a3a" />
          <circle cx="7.500" cy="5" r="2" fill="#fff" />
          <path d="M5 10h5v2H5zM3 12h9v1H3z" fill="#555" />
        </svg>
      </div>

      {/* red pointer arrow */}
      <svg width="70" height="122" viewBox="400 40 70 122" className="absolute left-[400px] top-[40px] pointer-events-none">
        <path d="M406 44l18 14-4 2 42 88 1 10-7-2-45-94-3 3z" fill="#ea4650" />
      </svg>

      <Watermark />

      {/* taskbar widgets peeking in at the right edge */}
      <div className="absolute left-[1591px] top-[716px] w-[7px] h-[52px] rounded-[3px] bg-[#666] overflow-hidden flex flex-col justify-end">
        <div className="h-[20px] bg-[repeating-linear-gradient(0deg,#5c8f5c_0,#5c8f5c_1px,#777_1px,#777_2px)]" />
      </div>
      <div className="absolute left-[1591px] top-[798px] w-[9px] h-[64px] rounded-tl-[3px] bg-[#4a5560] flex justify-center">
        <div className="mt-[4px] w-[3px] h-[60px] bg-[#39424c] flex flex-col justify-end">
          <div className="h-[22px] bg-[repeating-linear-gradient(0deg,#3f8fcf_0,#3f8fcf_1px,transparent_1px,transparent_2px)]" />
        </div>
      </div>
    </div>
  )
}
